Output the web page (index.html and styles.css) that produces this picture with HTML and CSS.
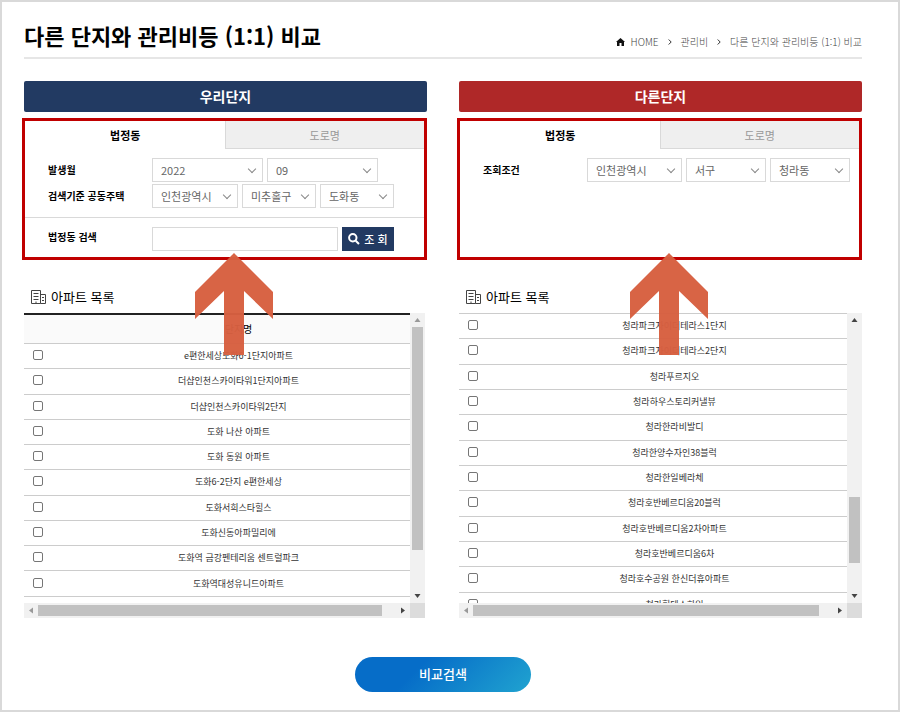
FILE: index.html
```html
<!DOCTYPE html>
<html lang="ko">
<head>
<meta charset="utf-8">
<meta name="viewport" content="width=device-width, initial-scale=1">
<title>다른 단지와 관리비등 (1:1) 비교</title>
<link rel="stylesheet" href="styles.css">
</head>
<body>
<svg class="sprite" aria-hidden="true">
  <symbol id="arrow" viewBox="0 0 78 102"><path d="M39 0 78 39V66L49 38V102H29V38L0 66V39Z"/></symbol>
  <symbol id="building" viewBox="0 0 15 14"><path d="M.5.5H9.500V13.500H.5ZM9.500 4.500H14.500V13.500H9.500M2.500 3.500H7.500M2.500 6.500H7.500M2.500 9.500H7.500M11 7.500H13M11 10.500H13M5 11.500V13.500"/></symbol>
</svg>
<main class="page">
  <header class="page-head">
    <h1>다른 단지와 관리비등 (1:1) 비교</h1>
    <nav class="crumbs" aria-label="현재 위치">
      <svg class="home" viewBox="0 0 9 8" aria-hidden="true"><path d="M4.500 0 9 4H8V8H5.500V5H3.500V8H1V4H0Z"/></svg>
      <a href="#">HOME</a>
      <svg class="sep" viewBox="0 0 4 6" aria-hidden="true"><path d="M.7.500 3.200 3 .7 5.500"/></svg>
      <a href="#">관리비</a>
      <svg class="sep" viewBox="0 0 4 6" aria-hidden="true"><path d="M.7.500 3.200 3 .7 5.500"/></svg>
      <a href="#">다른 단지와 관리비등 (1:1) 비교</a>
    </nav>
  </header>

  <div class="columns">
    <section class="column">
      <h2 class="bar bar-ours">우리단지</h2>
      <form class="search">
        <div class="tabs">
          <button type="button" class="tab active">법정동</button>
          <button type="button" class="tab">도로명</button>
        </div>
        <div class="fields">
          <div class="row">
            <label class="name" for="year">발생월</label>
            <span class="select w-xl"><select id="year"><option>2022</option></select></span>
            <span class="select w-xl"><select aria-label="월"><option>09</option></select></span>
          </div>
          <div class="row">
            <label class="name" for="city">검색기준 공동주택</label>
            <span class="select w-m"><select id="city"><option>인천광역시</option></select></span>
            <span class="select w-s"><select aria-label="구"><option>미추홀구</option></select></span>
            <span class="select w-s"><select aria-label="동"><option>도화동</option></select></span>
          </div>
        </div>
        <div class="keyword">
          <div class="row">
            <label class="name" for="keyword">법정동 검색</label>
            <input class="text" id="keyword" type="text">
            <button type="button" class="find"><svg viewBox="0 0 12 12" aria-hidden="true"><circle cx="4.800" cy="4.800" r="3.700"/><path d="M7.700 7.700 11 11"/></svg>조 회</button>
          </div>
        </div>
        <svg class="pointer" aria-hidden="true"><use href="#arrow"/></svg>
      </form>

      <h3><svg aria-hidden="true"><use href="#building"/></svg>아파트 목록</h3>
      <div class="list list-ours">
        <div class="view">
          <table class="with-head">
            <thead><tr><th class="check"></th><th>단지명</th></tr></thead>
            <tbody>
              <tr><td class="check"><input type="checkbox" id="a1"></td><td><label for="a1">e편한세상도화6-1단지아파트</label></td></tr>
              <tr><td class="check"><input type="checkbox" id="a2"></td><td><label for="a2">더샵인천스카이타워1단지아파트</label></td></tr>
              <tr><td class="check"><input type="checkbox" id="a3"></td><td><label for="a3">더샵인천스카이타워2단지</label></td></tr>
              <tr><td class="check"><input type="checkbox" id="a4"></td><td><label for="a4">도화 나산 아파트</label></td></tr>
              <tr><td class="check"><input type="checkbox" id="a5"></td><td><label for="a5">도화 동원 아파트</label></td></tr>
              <tr><td class="check"><input type="checkbox" id="a6"></td><td><label for="a6">도화6-2단지 e편한세상</label></td></tr>
              <tr><td class="check"><input type="checkbox" id="a7"></td><td><label for="a7">도화서희스타힐스</label></td></tr>
              <tr><td class="check"><input type="checkbox" id="a8"></td><td><label for="a8">도화신동아파밀리에</label></td></tr>
              <tr><td class="check"><input type="checkbox" id="a9"></td><td><label for="a9">도화역 금강펜테리움 센트럴파크</label></td></tr>
              <tr><td class="check"><input type="checkbox" id="a10"></td><td><label for="a10">도화역대성유니드아파트</label></td></tr>
              <tr><td class="check"><input type="checkbox" id="a11" aria-label="다음 단지"></td><td></td></tr>
            </tbody>
          </table>
        </div>
        <div class="vbar" aria-hidden="true"><i class="up off"></i><div class="track"><div class="thumb"></div></div><i class="down"></i></div>
        <div class="hbar" aria-hidden="true"><i class="left off"></i><div class="track"><div class="thumb"></div></div><i class="right"></i></div>
        <div class="corner"></div>
      </div>
    </section>

    <section class="column">
      <h2 class="bar bar-other">다른단지</h2>
      <form class="search">
        <div class="tabs">
          <button type="button" class="tab active">법정동</button>
          <button type="button" class="tab">도로명</button>
        </div>
        <div class="fields">
          <div class="row">
            <label class="name" for="city2">조회조건</label>
            <span class="select w-l"><select id="city2"><option>인천광역시</option></select></span>
            <span class="select w-ms"><select aria-label="구"><option>서구</option></select></span>
            <span class="select w-ms"><select aria-label="동"><option>청라동</option></select></span>
          </div>
        </div>
        <svg class="pointer" aria-hidden="true"><use href="#arrow"/></svg>
      </form>

      <h3><svg aria-hidden="true"><use href="#building"/></svg>아파트 목록</h3>
      <div class="list list-other">
        <div class="view">
          <table>
            <tbody>
              <tr><td class="check"><input type="checkbox" id="b1"></td><td><label for="b1">청라파크자이더테라스1단지</label></td></tr>
              <tr><td class="check"><input type="checkbox" id="b2"></td><td><label for="b2">청라파크자이더테라스2단지</label></td></tr>
              <tr><td class="check"><input type="checkbox" id="b3"></td><td><label for="b3">청라푸르지오</label></td></tr>
              <tr><td class="check"><input type="checkbox" id="b4"></td><td><label for="b4">청라하우스토리커낼뷰</label></td></tr>
              <tr><td class="check"><input type="checkbox" id="b5"></td><td><label for="b5">청라한라비발디</label></td></tr>
              <tr><td class="check"><input type="checkbox" id="b6"></td><td><label for="b6">청라한양수자인38블럭</label></td></tr>
              <tr><td class="check"><input type="checkbox" id="b7"></td><td><label for="b7">청라한일베라체</label></td></tr>
              <tr><td class="check"><input type="checkbox" id="b8"></td><td><label for="b8">청라호반베르디움20블럭</label></td></tr>
              <tr><td class="check"><input type="checkbox" id="b9"></td><td><label for="b9">청라호반베르디움2차아파트</label></td></tr>
              <tr><td class="check"><input type="checkbox" id="b10"></td><td><label for="b10">청라호반베르디움6차</label></td></tr>
              <tr><td class="check"><input type="checkbox" id="b11"></td><td><label for="b11">청라호수공원 한신더휴아파트</label></td></tr>
              <tr><td class="check"><input type="checkbox" id="b12"></td><td><label for="b12">청라힐데스하임</label></td></tr>
            </tbody>
          </table>
        </div>
        <div class="vbar" aria-hidden="true"><i class="up"></i><div class="track"><div class="thumb"></div></div><i class="down"></i></div>
        <div class="hbar" aria-hidden="true"><i class="left off"></i><div class="track"><div class="thumb"></div></div><i class="right"></i></div>
        <div class="corner"></div>
      </div>
    </section>
  </div>

  <button type="button" class="compare">비교검색</button>
</main>
</body>
</html>
```
FILE: styles.css
```css
* { box-sizing: border-box; }

body {
  margin: 0;
  background: #fff;
  color: #000;
  font: 10px/16px "Noto Sans CJK KR", sans-serif;
}

button, input, select { font: inherit; margin: 0; }

.sprite { display: none; }

.page {
  min-height: 100vh;
  padding: 16px 36px 16px 22px;
  border: 2px solid #d9d9d9;
}

/* Heading and breadcrumb */
.page-head {
  display: flex;
  justify-content: space-between;
  align-items: center;
  height: 41px;
  border-bottom: 2px solid #e6e6e6;
}

h1 {
  margin: 0;
  padding-bottom: 6px;
  font-size: 22px;
  line-height: 32px;
  font-weight: 700;
}

.crumbs {
  display: flex;
  align-items: center;
  padding-top: 8px;
}

.crumbs a {
  color: #444;
  font-weight: 300;
  text-decoration: none;
}

.home { width: 9px; height: 8px; margin-right: 6px; fill: #111; }

.sep {
  width: 4px;
  height: 6px;
  margin: 0 9px;
  fill: none;
  stroke: #333;
}

/* Two complexes side by side */
.columns {
  display: grid;
  grid-template-columns: 1fr 1fr;
  gap: 32px;
  margin-top: 22px;
}

.bar {
  margin: 0 0 6px;
  padding-bottom: 1px;
  border-radius: 2px;
  color: #fff;
  font-size: 14px;
  line-height: 30px;
  font-weight: 700;
  text-align: center;
}

.bar-ours { background: #223a62; }
.bar-other { background: #af2828; }

.search {
  position: relative;
  min-height: 142px;
  margin-left: -2px;
  border: 3px solid #c00000;
}

.tabs {
  display: grid;
  grid-template-columns: 1fr 1fr;
}

.tab {
  height: 28px;
  padding: 0;
  border: solid #d9d9d9;
  border-width: 0 0 1px 1px;
  background: #efefef;
  color: #999;
  font-size: 11px;
}

.tab.active {
  border-color: transparent;
  background: #fff;
  color: #000;
  font-weight: 700;
}

.fields {
  display: grid;
  gap: 2px;
  padding: 9px 0;
}

.keyword {
  padding: 9px 0 6px;
  border-top: 1px solid #d9d9d9;
}

.row {
  display: flex;
  gap: 4px;
  padding-left: 23px;
}

.name {
  width: 100px;
  line-height: 24px;
  font-weight: 700;
}

.keyword .name { line-height: 20px; }

.select {
  display: flex;
  position: relative;
}

.select::after {
  content: "";
  position: absolute;
  top: 8px;
  right: 8px;
  width: 5px;
  height: 5px;
  border: solid #888;
  border-width: 0 1px 1px 0;
  transform: rotate(45deg);
  pointer-events: none;
}

.select select {
  width: 100%;
  height: 24px;
  padding: 0 0 0 8px;
  appearance: none;
  border: 1px solid #d9d9d9;
  border-radius: 0;
  background: #fff;
  color: #666;
  font-size: 11px;
}

.w-xl { width: 111px; }
.w-l { width: 95px; }
.w-m { width: 86px; }
.w-ms { width: 80px; }
.w-s { width: 74px; }

.text {
  width: 186px;
  height: 24px;
  border: 1px solid #d9d9d9;
}

.find {
  display: flex;
  align-items: center;
  justify-content: center;
  gap: 4px;
  width: 52px;
  height: 24px;
  padding: 0;
  border: 0;
  background: #223a62;
  color: #fff;
  font-size: 11px;
  font-weight: 500;
}

.find svg {
  width: 12px;
  height: 12px;
  fill: none;
  stroke: #fff;
  stroke-width: 2;
}

.pointer {
  position: absolute;
  top: 132px;
  left: 50%;
  z-index: 1;
  width: 78px;
  height: 102px;
  margin-left: -30px;
  fill: #d75f40;
  opacity: .97;
  pointer-events: none;
}

/* Apartment list */
h3 {
  display: flex;
  align-items: center;
  gap: 5px;
  margin: 26px 0 6px 7px;
  font-size: 13px;
  line-height: 21px;
  font-weight: 400;
}

h3 svg {
  width: 15px;
  height: 14px;
  fill: none;
  stroke: #444;
}

.list {
  display: grid;
  grid-template-columns: 1fr 15px;
  grid-template-rows: 290px 15px;
}

.list-ours { margin-right: 2px; }

.view { overflow: hidden; }

table {
  width: 100%;
  height: 304px;
  border-collapse: separate;
  border-spacing: 0;
  table-layout: fixed;
}

.with-head { height: 308px; }

th {
  height: 30px;
  padding: 0;
  border-top: 2px solid #222;
  background: #fafafa;
  font-weight: 400;
}

td {
  height: 25px;
  padding: 0;
  border-top: 1px solid #ccc;
  color: #333;
  font-size: 9px;
  line-height: 16px;
  text-align: center;
}

.check { width: 43px; }

td.check {
  padding: 0 0 2px 9px;
  text-align: left;
}

td input {
  display: block;
  width: 10px;
  height: 10px;
  appearance: none;
  border: 1px solid #767676;
  border-radius: 2px;
  background: #fff;
}

td input:checked { background: #223a62; }

/* Scroll bars */
.vbar, .hbar {
  display: flex;
  justify-content: space-between;
  align-items: center;
  background: #f1f1f1;
}

.vbar { flex-direction: column; }

.track { flex: 1; display: flex; }
.vbar .track { flex-direction: column; width: 11px; }
.hbar .track { height: 11px; }
.thumb { background: #c1c1c1; }

.list-ours .vbar .thumb { height: 85%; }
.list-other .vbar .thumb { height: 25%; margin-top: 170px; }
.hbar .thumb { width: 96%; }

.vbar i, .hbar i {
  width: 14px;
  height: 14px;
  background: #444;
}

.vbar .off, .hbar .off { background: #999; }

.up { clip-path: polygon(4px 9px, 7px 5px, 10px 9px); }
.down { clip-path: polygon(4px 5px, 10px 5px, 7px 9px); }
.left { clip-path: polygon(9px 4px, 9px 10px, 5px 7px); }
.right { clip-path: polygon(5px 4px, 9px 7px, 5px 10px); }

.corner { background: #dcdcdc; }

.compare {
  display: block;
  width: 176px;
  height: 35px;
  margin: 39px auto 0;
  padding: 0 0 2px;
  border: 0;
  border-radius: 18px;
  background: linear-gradient(135deg, #066dc8 35%, #20a3d0);
  color: #fff;
  font-size: 13px;
  font-weight: 500;
}
```
